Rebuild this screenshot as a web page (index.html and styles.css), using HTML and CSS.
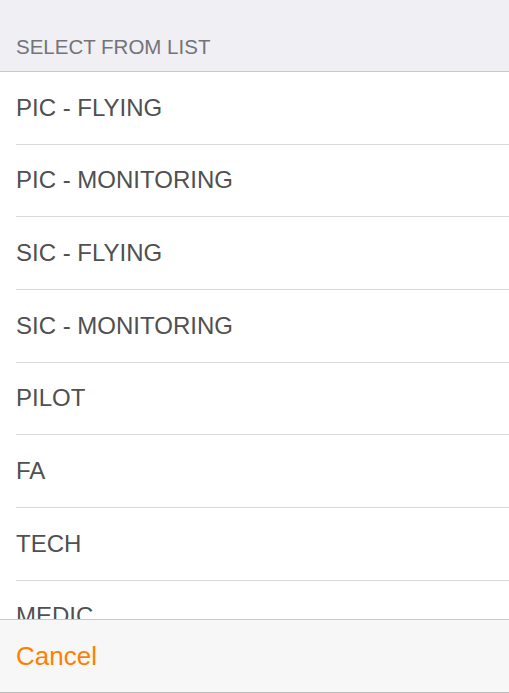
FILE: index.html
```html
<!DOCTYPE html>
<html>
<head>
<meta charset="utf-8">
<link rel="stylesheet" href="styles.css">
</head>
<body>
<div class="sheet">
  <div class="sheet-header">SELECT FROM LIST</div>
  <div class="list">
    <div class="row"><div class="row-inner">PIC - FLYING</div></div>
    <div class="row"><div class="row-inner">PIC - MONITORING</div></div>
    <div class="row"><div class="row-inner">SIC - FLYING</div></div>
    <div class="row"><div class="row-inner">SIC - MONITORING</div></div>
    <div class="row"><div class="row-inner">PILOT</div></div>
    <div class="row"><div class="row-inner">FA</div></div>
    <div class="row"><div class="row-inner">TECH</div></div>
    <div class="row"><div class="row-inner">MEDIC</div></div>
  </div>
  <div class="footer"><span class="cancel">Cancel</span></div>
</div>
</body>
</html>
```
FILE: styles.css
```css
html, body {
  margin: 0;
  padding: 0;
  background: #ffffff;
}
body {
  font-family: "Liberation Sans", Arial, sans-serif;
}
.sheet {
  width: 509px;
  height: 693px;
  display: flex;
  flex-direction: column;
  overflow: hidden;
}
.sheet-header {
  flex: 0 0 auto;
  height: 72px;
  box-sizing: border-box;
  padding: 35px 16px 0;
  background: #efeff4;
  border-bottom: 1px solid #c8c7cc;
  color: #737378;
  font-size: 20.5px;
  line-height: 23px;
}
.list {
  flex: 1 1 auto;
  overflow: hidden;
  background: #ffffff;
}
.row {
  height: 72.67px;
  padding-left: 16px;
  box-sizing: border-box;
}
.row-inner {
  height: 100%;
  box-sizing: border-box;
  border-bottom: 1px solid #d9d9dc;
  display: flex;
  align-items: center;
  color: #505050;
  font-size: 24px;
  line-height: 28px;
}
.footer {
  flex: 0 0 auto;
  height: 74px;
  box-sizing: border-box;
  border-top: 1px solid #c8c7cc;
  border-bottom: 1px solid #bdbdbd;
  background: #f7f7f7;
  padding: 21px 16px 0;
}
.cancel {
  display: block;
  color: #ff8000;
  font-size: 26px;
  line-height: 30px;
}
```
